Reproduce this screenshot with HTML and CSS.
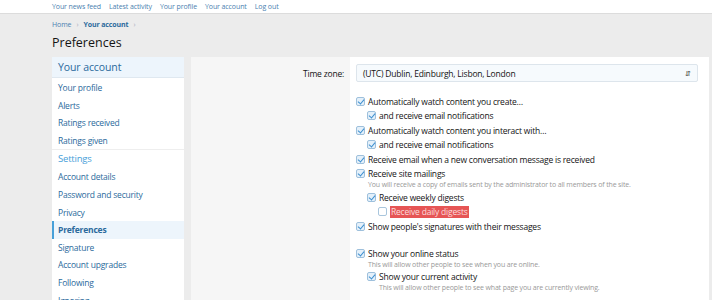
FILE: index.html
```html
<!DOCTYPE html>
<html lang="en">
<head>
  <meta charset="UTF-8" />
  <title>Preferences</title>
  <link rel="stylesheet" href="styles.css">
</head>
<body>
  <div class="topbar">
    <div class="wrap topnav">
      <a href="#">Your news feed</a>
      <a href="#">Latest activity</a>
      <a href="#">Your profile</a>
      <a href="#">Your account</a>
      <a href="#">Log out</a>
    </div>
  </div>

  <div class="wrap">
    <div class="crumbs">
      <a href="#">Home</a><span class="sep">&rsaquo;</span><a href="#" class="cur">Your account</a><span class="sep">&rsaquo;</span>
    </div>
    <h1>Preferences</h1>

    <div class="layout">
      <aside class="side">
        <div class="side-head">Your account</div>
        <a href="#">Your profile</a>
        <a href="#">Alerts</a>
        <a href="#">Ratings received</a>
        <a href="#">Ratings given</a>
        <div class="side-sub">Settings</div>
        <a href="#">Account details</a>
        <a href="#">Password and security</a>
        <a href="#">Privacy</a>
        <a href="#" class="active">Preferences</a>
        <a href="#">Signature</a>
        <a href="#">Account upgrades</a>
        <a href="#">Following</a>
        <a href="#">Ignoring</a>
      </aside>

      <main class="panel">
        <div class="row">
          <div class="label">Time zone:</div>
          <div class="field">
            <div class="select">(UTC) Dublin, Edinburgh, Lisbon, London<span class="arrows">&#8693;</span></div>
          </div>
        </div>

        <div class="row">
          <div class="label"></div>
          <div class="field opts">
            <div class="opt"><span class="cb on"></span><span>Automatically watch content you create&hellip;</span></div>
            <div class="opt sub"><span class="cb on"></span><span>and receive email notifications</span></div>
            <div class="opt"><span class="cb on"></span><span>Automatically watch content you interact with&hellip;</span></div>
            <div class="opt sub"><span class="cb on"></span><span>and receive email notifications</span></div>
            <div class="opt"><span class="cb on"></span><span>Receive email when a new conversation message is received</span></div>
            <div class="opt"><span class="cb on"></span><span>Receive site mailings</span></div>
            <div class="hint">You will receive a copy of emails sent by the administrator to all members of the site.</div>
            <div class="opt sub"><span class="cb on"></span><span>Receive weekly digests</span></div>
            <div class="opt sub2"><span class="cb"></span><span class="mark">Receive daily digests</span></div>
            <div class="opt"><span class="cb on"></span><span>Show people's signatures with their messages</span></div>

            <div class="opt gap"><span class="cb on"></span><span>Show your online status</span></div>
            <div class="hint">This will allow other people to see when you are online.</div>
            <div class="opt sub"><span class="cb on"></span><span>Show your current activity</span></div>
            <div class="hint sub">This will allow other people to see what page you are currently viewing.</div>
          </div>
        </div>
      </main>
    </div>
  </div>
</body>
</html>
```

FILE: styles.css
```css
* {
  margin: 0;
  padding: 0;
  box-sizing: border-box;
}

body {
  background: #ececec;
  font-family: "Open Sans", sans-serif;
  font-size: 8.5px;
  letter-spacing: -0.2px;
  color: #141414;
  overflow: hidden;
}

a {
  color: #2b6a9c;
  text-decoration: none;
}

.wrap {
  padding: 0 3px 0 52px;
}

.topbar {
  background: #fff;
  border-bottom: 1px solid #dcdcdc;
  height: 14px;
}

.topnav {
  display: flex;
  gap: 8px;
  line-height: 13px;
  font-size: 7px;
  letter-spacing: -0.1px;
}

.topnav a {
  color: #4b7fb0;
}

.crumbs {
  margin-top: 6px;
  font-size: 7px;
  letter-spacing: -0.1px;
  line-height: 10px;
  color: #9ab;
}

.crumbs a {
  color: #4b7fb0;
}

.crumbs .cur {
  font-weight: bold;
  color: #2b6a9c;
}

.crumbs .sep {
  margin: 0 5px;
  color: #aab;
}

h1 {
  font-weight: normal;
  font-size: 12.5px;
  letter-spacing: 0;
  line-height: 18px;
  margin-top: 4px;
  color: #141414;
}

.layout {
  display: flex;
  gap: 7px;
  margin-top: 5px;
}

.side {
  width: 132px;
  background: #fff;
  display: flex;
  flex-direction: column;
  flex-shrink: 0;
}

.side-head {
  background: #edf5fc;
  border-bottom: 1px solid #dfe8f0;
  color: #2b6a9c;
  font-size: 10.5px;
  letter-spacing: -0.1px;
  line-height: 20px;
  padding: 0 6px;
}

.side-sub {
  border-top: 1px solid #eee;
  color: #47a0d9;
  font-size: 9.5px;
  line-height: 18px;
  padding: 0 6px;
}

.side a {
  display: block;
  line-height: 17.6px;
  padding: 0 6px;
  color: #2b6a9c;
}

.side-head + a {
  margin-top: 1px;
}

.side a.active {
  background: #edf5fc;
  border-left: 2px solid #47a0d9;
  padding-left: 4px;
  font-weight: bold;
}

.panel {
  flex: 1;
  background: #fff;
  height: 250px;
}

.row {
  display: flex;
}

.label {
  width: 159px;
  flex-shrink: 0;
  background: #f6f6f6;
  text-align: right;
  padding: 11px 6px 0 0;
}

.field {
  flex: 1;
  padding: 7px 11px 0 6px;
}

.select {
  display: flex;
  justify-content: space-between;
  align-items: center;
  height: 18px;
  padding: 0 6px;
  background: #f6fafd;
  border: 1px solid #dde5ec;
  border-radius: 2px;
}

.arrows {
  font-size: 7px;
  color: #333;
}

.opts {
  padding-top: 12px;
  padding-bottom: 20px;
}

.opt {
  display: flex;
  align-items: center;
  height: 14.5px;
}

.opt.sub {
  padding-left: 11px;
}

.opt.sub2 {
  padding-left: 22px;
}

.opt.gap {
  margin-top: 12.5px;
}

.cb {
  width: 9px;
  height: 9px;
  border: 1px solid #a9c6dd;
  border-radius: 2px;
  margin-right: 3px;
  background: #fff;
  position: relative;
  flex-shrink: 0;
}

.cb.on {
  border-color: #9ec0dc;
  background: #e4f0fa;
}

.cb.on::after {
  content: "";
  position: absolute;
  left: 2px;
  top: 0;
  width: 3px;
  height: 5px;
  border: solid #3d8fd0;
  border-width: 0 1.5px 1.5px 0;
  transform: rotate(40deg);
}

.mark {
  background: #e65555;
  color: #fbdcdc;
  padding: 0 1px;
  line-height: 12px;
}

.hint {
  font-size: 7px;
  letter-spacing: -0.15px;
  color: #999;
  line-height: 9px;
  margin: -1px 0 1px;
  padding-left: 12px;
}

.hint.sub {
  padding-left: 23px;
}
```
